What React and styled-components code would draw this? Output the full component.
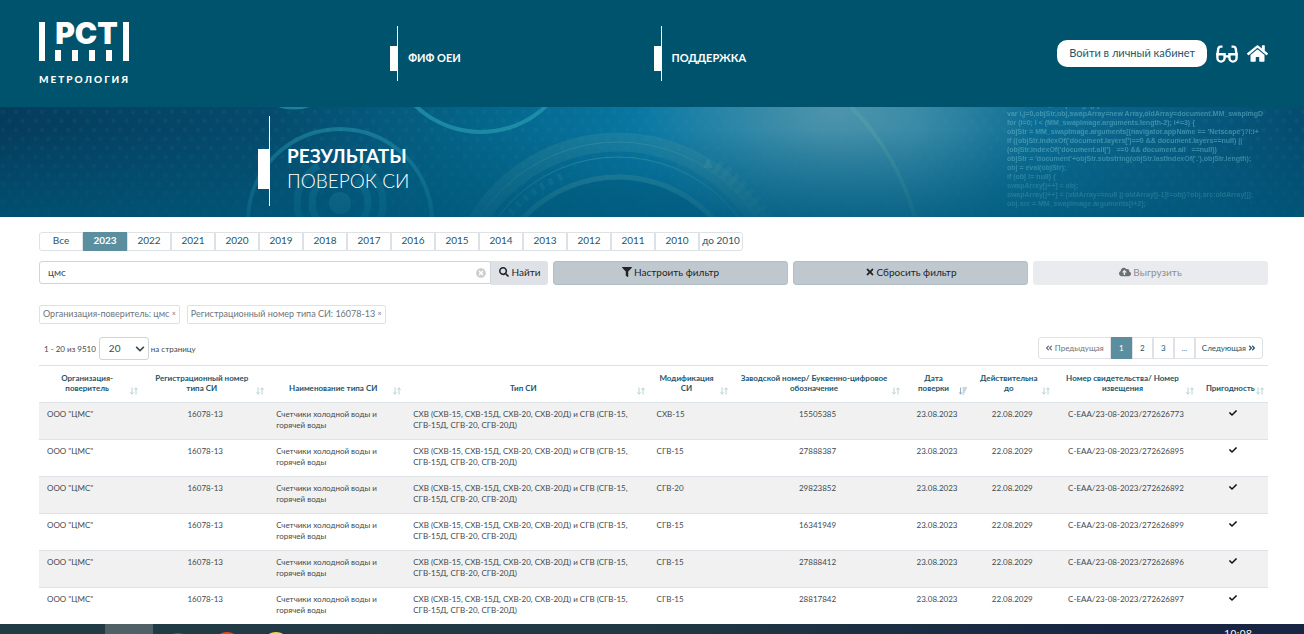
import React, { useState } from "react";
import styled, { createGlobalStyle } from "styled-components";
import {
  FaAngleDoubleLeft,
  FaAngleDoubleRight,
  FaCheck,
  FaChevronDown,
  FaCloudUploadAlt,
  FaFilter,
  FaHome,
  FaSearch,
  FaSortAmountDown,
  FaTimes,
  FaTimesCircle,
} from "react-icons/fa";

const years = [
  "Все", "2023", "2022", "2021", "2020", "2019", "2018", "2017",
  "2016", "2015", "2014", "2013", "2012", "2011", "2010", "до 2010",
];

const columns = [
  { title: "Организация-поверитель", width: "8.4%" },
  { title: "Регистрационный номер типа СИ", width: "10.25%" },
  { title: "Наименование типа СИ", width: "11.15%" },
  { title: "Тип СИ", width: "19.8%" },
  { title: "Модификация СИ", width: "6.75%" },
  { title: "Заводской номер/ Буквенно-цифровое обозначение", width: "14%" },
  { title: "Дата поверки", width: "5.45%", sorted: true },
  { title: "Действительна до", width: "6.8%" },
  { title: "Номер свидетельства/ Номер извещения", width: "11.7%" },
  { title: "Пригодность", width: "5.7%" },
];

const results = [
  { mod: "СХВ-15", serial: "15505385", cert: "С-ЕАА/23-08-2023/272626773" },
  { mod: "СГВ-15", serial: "27888387", cert: "С-ЕАА/23-08-2023/272626895" },
  { mod: "СГВ-20", serial: "29823852", cert: "С-ЕАА/23-08-2023/272626892" },
  { mod: "СГВ-15", serial: "16341949", cert: "С-ЕАА/23-08-2023/272626899" },
  { mod: "СГВ-15", serial: "27888412", cert: "С-ЕАА/23-08-2023/272626896" },
  { mod: "СГВ-15", serial: "28817842", cert: "С-ЕАА/23-08-2023/272626897" },
];

const code = `function MM_swapImage() { //v3.0
var i,j=0,objStr,obj,swapArray=new Array,oldArray=document.MM_swapImgD
for (i=0; i < (MM_swapImage.arguments.length-2); i+=3) {
objStr = MM_swapImage.arguments[(navigator.appName == 'Netscape')?i:i+
if ((objStr.indexOf('document.layers[')==0 && document.layers==null) ||
(objStr.indexOf('document.all[')   ==0 && document.all   ==null))
objStr = 'document'+objStr.substring(objStr.lastIndexOf('.'),objStr.length);
obj = eval(objStr);
if (obj != null) {
swapArray[j++] = obj;
swapArray[j++] = (oldArray==null || oldArray[j-1]!=obj)?obj.src:oldArray[j];
obj.src = MM_swapImage.arguments[i+2];`;

function SortIcon() {
  return (
    <svg width="8" height="8" viewBox="0 0 8 8" fill="none" stroke="currentColor">
      <path d="M2 0.5v6.5M0.4 5.4L2 7.2l1.6-1.8M6 7.5V1M4.4 2.6L6 0.8l1.6 1.8" />
    </svg>
  );
}

function GlassesIcon() {
  return (
    <svg width="22" height="18" viewBox="0 0 22 18" fill="none" stroke="currentColor" strokeWidth="2.4">
      <path d="M6.5 1.6H5C3.2 1.6 2.4 2.4 2.2 4L1.4 10.5M15.5 1.6H17c1.8 0 2.6.8 2.8 2.4l.8 6.5" />
      <path d="M1.4 9.2h7.2v3.6a3.4 3.6 0 0 1-7.2 0zM13.4 9.2h7.2v3.6a3.4 3.6 0 0 1-7.2 0z" />
      <path d="M8.6 11.4h4.8" />
    </svg>
  );
}

function BannerArt() {
  return (
    <Art viewBox="0 0 1304 110" preserveAspectRatio="xMidYMid slice" aria-hidden="true">
      <defs>
        <pattern id="dots" width="13" height="18" patternUnits="userSpaceOnUse">
          <circle cx="3" cy="5" r="2.2" fill="#2c9ac0" opacity="0.08" />
          <circle cx="9.5" cy="14" r="2.2" fill="#2c9ac0" opacity="0.08" />
        </pattern>
        <linearGradient id="shade" x1="0" y1="0" x2="0" y2="1">
          <stop offset="0.2" stopColor="#00587a" stopOpacity="0" />
          <stop offset="1" stopColor="#00587a" stopOpacity="0.7" />
        </linearGradient>
      </defs>
      <rect width="1304" height="110" fill="url(#dots)" />
      <g fill="none" stroke="#2ca3b8">
        <circle cx="340" cy="114" r="92" strokeWidth="4" opacity="0.45" />
        <circle cx="340" cy="96" r="43" strokeWidth="7" opacity="0.3" strokeDasharray="90 45" strokeDashoffset="45" />
        <circle cx="340" cy="96" r="28" strokeWidth="7" opacity="0.35" strokeDasharray="55 33" strokeDashoffset="27" />
        <circle cx="481" cy="-70" r="95" strokeWidth="4" opacity="0.6" />
        <circle cx="294" cy="-48" r="49" strokeWidth="3" opacity="0.6" />
      </g>
      <circle cx="340" cy="96" r="11" fill="#2b8da6" opacity="0.5" />
      <g fill="none" stroke="#5ba5a8">
        <circle cx="618" cy="200" r="165" strokeWidth="19" opacity="0.22" />
        <circle cx="618" cy="200" r="165" strokeWidth="1" opacity="0.35" />
        <circle cx="618" cy="200" r="150" strokeWidth="1" opacity="0.55" />
        <circle cx="618" cy="200" r="130" strokeWidth="5" opacity="0.4" />
        <path d="M510 106 A143 143 0 0 1 566 68" strokeWidth="7" strokeDasharray="4 6" opacity="0.25" />
        <path d="M716 59 A172 172 0 0 1 768 115" strokeWidth="14" strokeDasharray="5 5" opacity="0.2" />
        <path d="M851 0 Q896 45 915 110" strokeWidth="4" opacity="0.4" />
      </g>
      <circle cx="618" cy="200" r="127" fill="#005878" opacity="0.4" />
      <path d="M703 61l5-10 5 10z" fill="#5ba5a8" opacity="0.35" />
      <rect width="1304" height="110" fill="url(#shade)" />
    </Art>
  );
}

export default function App() {
  const [year, setYear] = useState("2023");
  const [query, setQuery] = useState("цмс");

  return (
    <Screen>
      <GlobalStyle />
      <Page>
        <Header>
          <Logo href="#">
            <LogoMark>
              <LogoBar />
              <LogoCenter>
                <LogoText>РСТ</LogoText>
                <LogoTicks>
                  <i />
                  <i />
                  <i />
                  <i />
                </LogoTicks>
              </LogoCenter>
              <LogoBar />
            </LogoMark>
            <LogoCaption>МЕТРОЛОГИЯ</LogoCaption>
          </Logo>
          <NavItem href="#">ФИФ ОЕИ</NavItem>
          <HeaderEnd>
            <NavItem href="#">ПОДДЕРЖКА</NavItem>
            <Actions>
              <LoginButton>Войти в личный кабинет</LoginButton>
              <IconLink href="#" aria-label="Версия для слабовидящих">
                <GlassesIcon />
              </IconLink>
              <IconLink href="#" aria-label="Главная">
                <FaHome />
              </IconLink>
            </Actions>
          </HeaderEnd>
        </Header>

        <Banner>
          <BannerArt />
          <BannerCode aria-hidden="true">{code}</BannerCode>
          <Title>
            <strong>РЕЗУЛЬТАТЫ</strong>
            <span>ПОВЕРОК СИ</span>
          </Title>
        </Banner>

        <Content>
          <Years>
            {years.map((item) => (
              <YearButton key={item} $active={item === year} onClick={() => setYear(item)}>
                {item}
              </YearButton>
            ))}
          </Years>

          <Toolbar>
            <SearchGroup>
              <SearchInput
                aria-label="Поиск"
                value={query}
                onChange={(e) => setQuery(e.target.value)}
              />
              <ClearButton aria-label="Очистить" onClick={() => setQuery("")}>
                <FaTimesCircle />
              </ClearButton>
              <FindButton>
                <FaSearch />
                Найти
              </FindButton>
            </SearchGroup>
            <ToolButton>
              <FaFilter />
              Настроить фильтр
            </ToolButton>
            <ToolButton>
              <FaTimes />
              Сбросить фильтр
            </ToolButton>
            <ToolButton disabled>
              <FaCloudUploadAlt />
              Выгрузить
            </ToolButton>
          </Toolbar>

          <Tags>
            <Tag>
              Организация-поверитель: цмс <sup>×</sup>
            </Tag>
            <Tag>
              Регистрационный номер типа СИ: 16078-13 <sup>×</sup>
            </Tag>
          </Tags>

          <PageRow>
            <PageSize>
              <span>1 - 20 из 9510</span>
              <SelectBox>
                <select id="size" defaultValue="20">
                  <option>20</option>
                  <option>50</option>
                  <option>100</option>
                </select>
                <FaChevronDown />
              </SelectBox>
              <label htmlFor="size">на страницу</label>
            </PageSize>
            <Pager>
              <PageButton $wide disabled>
                <FaAngleDoubleLeft />
                Предыдущая
              </PageButton>
              <PageButton $active>1</PageButton>
              <PageButton>2</PageButton>
              <PageButton>3</PageButton>
              <PageButton disabled>...</PageButton>
              <PageButton $wide>
                Следующая
                <FaAngleDoubleRight />
              </PageButton>
            </Pager>
          </PageRow>

          <Table>
            <thead>
              <tr>
                {columns.map((col) => (
                  <HeadCell key={col.title} style={{ width: col.width }}>
                    {col.title}
                    <SortMark $active={col.sorted}>
                      {col.sorted ? <FaSortAmountDown /> : <SortIcon />}
                    </SortMark>
                  </HeadCell>
                ))}
              </tr>
            </thead>
            <tbody>
              {results.map((row) => (
                <Row key={row.cert}>
                  <Cell>ООО "ЦМС"</Cell>
                  <Cell $center>16078-13</Cell>
                  <Cell>Счетчики холодной воды и горячей воды</Cell>
                  <Cell>
                    СХВ (СХВ-15, СХВ-15Д, СХВ-20, СХВ-20Д) и СГВ (СГВ-15, СГВ-15Д, СГВ-20, СГВ-20Д)
                  </Cell>
                  <Cell>{row.mod}</Cell>
                  <Cell $center>{row.serial}</Cell>
                  <Cell $center>23.08.2023</Cell>
                  <Cell $center>22.08.2029</Cell>
                  <Cell $center>{row.cert}</Cell>
                  <Cell $center>
                    <FaCheck />
                  </Cell>
                </Row>
              ))}
            </tbody>
          </Table>
        </Content>
      </Page>

      <Taskbar>
        <TaskApp $active $color="#d3303a" />
        <TaskApp $color="#c22f3c" />
        <TaskApp $color="#f4431f" $raised />
        <TaskApp $color="#f8d548" $raised />
        <Clock>10:08</Clock>
      </Taskbar>
    </Screen>
  );
}

const GlobalStyle = createGlobalStyle`
  * {
    box-sizing: border-box;
  }
  body {
    margin: 0;
    background: #fff;
    color: #3f4a50;
    font-family: Lato, "Open Sans", sans-serif;
    font-size: 10px;
  }
  button, input, select {
    font: inherit;
    color: inherit;
    margin: 0;
  }
  a {
    color: inherit;
    text-decoration: none;
  }
`;

const Screen = styled.div`
  display: flex;
  flex-direction: column;
  height: 100vh;
`;

const Page = styled.main`
  flex: 1;
  min-height: 0;
  overflow: hidden;
`;

const Header = styled.header`
  display: grid;
  grid-template-columns: 4fr 3fr 7fr;
  align-items: center;
  height: 107px;
  padding: 0 36px 0 39px;
  background: #00536c;
  color: #fff;
`;

const Logo = styled.a`
  display: flex;
  flex-direction: column;
  gap: 12px;
  width: 90px;
`;

const LogoMark = styled.div`
  display: flex;
  justify-content: space-between;
  height: 39px;
`;

const LogoBar = styled.div`
  width: 6px;
  background: #fff;
`;

const LogoCenter = styled.div`
  display: flex;
  flex-direction: column;
  justify-content: space-between;
  margin-left: 5px;
`;

const LogoText = styled.div`
  font-family: Inter, sans-serif;
  font-size: 30px;
  font-weight: 900;
  line-height: 23px;
`;

const LogoTicks = styled.div`
  display: flex;
  gap: 11px;
  height: 11px;

  i {
    width: 6px;
    background: #fff;
  }
`;

const LogoCaption = styled.div`
  font-size: 10px;
  font-weight: 900;
  line-height: 12px;
  letter-spacing: 2px;
`;

const NavItem = styled.a`
  height: 55px;
  padding: 4px 0 0 18px;
  background:
    linear-gradient(#fff, #fff) 0 20px / 8px 25px no-repeat,
    linear-gradient(#fff, #fff) 7px 0 / 1px 100% no-repeat;
  font-size: 11px;
  font-weight: 700;
  line-height: 55px;
`;

const HeaderEnd = styled.div`
  display: flex;
  align-items: center;
  justify-content: space-between;
`;

const Actions = styled.div`
  display: flex;
  align-items: center;
  gap: 9px;
`;

const LoginButton = styled.button`
  height: 27px;
  padding: 0 12px 2px;
  border: none;
  border-radius: 10px;
  background: #fff;
  color: #24566b;
  font-size: 11px;
`;

const IconLink = styled.a`
  display: flex;
  font-size: 21px;
`;

const Banner = styled.section`
  position: relative;
  height: 110px;
  padding: 9px 0 0 258px;
  overflow: hidden;
  background:
    radial-gradient(ellipse 200px 150px at 64% 0, rgba(110, 160, 175, 0.65), transparent),
    linear-gradient(90deg, #053c5c 0, #054a6c 20%, #046488 36%, #0878a4 50%, #1b7ea2 70%, #0c6b92 80%, #044c70 100%);
  color: #fff;
`;

const Art = styled.svg`
  position: absolute;
  inset: 0;
  width: 100%;
  height: 100%;
`;

const BannerCode = styled.pre`
  position: absolute;
  top: -7px;
  right: 38px;
  width: 259px;
  margin: 0;
  color: #5fb0c4;
  font: bold 7px/9px "Liberation Sans", sans-serif;
  opacity: 0.6;
  mask-image: linear-gradient(#000 50%, rgba(0, 0, 0, 0.5) 80%);
`;

const Title = styled.h1`
  position: relative;
  display: flex;
  flex-direction: column;
  height: 90px;
  margin: 0;
  padding: 27px 0 0 29px;
  background:
    linear-gradient(#fff, #fff) 11px 0 / 1px 100% no-repeat,
    linear-gradient(#fff, #fff) 0 33px / 11px 40px no-repeat;
  font-size: 19px;
  font-weight: 300;
  line-height: 25px;

  strong {
    font-weight: 700;
  }
`;

const Content = styled.section`
  padding: 15px 36px 0 39px;
`;

const Years = styled.div`
  display: flex;
`;

const YearButton = styled.button`
  width: 44px;
  height: 19px;
  padding: 0 0 4px;
  border: 1px solid ${(p) => (p.$active ? "#5b8fa0" : "#dee2e6")};
  background: ${(p) => (p.$active ? "#5b8fa0" : "#fff")};
  color: ${(p) => (p.$active ? "#fff" : "#24566b")};
  font-weight: ${(p) => (p.$active ? 700 : 400)};
  line-height: 12px;
  white-space: nowrap;

  &:first-child {
    border-radius: 3px 0 0 3px;
  }
  &:last-child {
    border-radius: 0 3px 3px 0;
  }
`;

const Toolbar = styled.div`
  display: grid;
  grid-template-columns: 13fr 6fr 6fr 6fr;
  gap: 5px;
  margin-top: 10px;
`;

const SearchGroup = styled.div`
  display: flex;
  position: relative;
  height: 24px;
`;

const SearchInput = styled.input`
  flex: 1;
  min-width: 0;
  height: 23px;
  padding: 0 24px 2px 8px;
  border: 1px solid #ced4da;
  border-radius: 3px 0 0 3px;
  outline: none;
`;

const ClearButton = styled.button`
  position: absolute;
  top: 7px;
  right: 62px;
  display: flex;
  padding: 0;
  border: none;
  background: none;
  color: #ccc;
`;

const FindButton = styled.button`
  display: flex;
  align-items: center;
  justify-content: center;
  gap: 3px;
  width: 57px;
  padding: 0 0 3px;
  border: none;
  border-radius: 0 3px 3px 0;
  background: #dee2e6;
  color: #212529;
`;

const ToolButton = styled.button`
  display: flex;
  align-items: center;
  justify-content: center;
  gap: 2px;
  height: 24px;
  padding: 0 0 3px;
  border: 1px solid #b3bfc8;
  border-radius: 3px;
  background: #c0c8cf;
  color: #212529;

  &:disabled {
    border-color: #e9ebee;
    background: #e9ebee;
    color: #8b8f93;
  }
  &:disabled svg {
    color: #6b6f73;
    font-size: 12px;
  }
`;

const Tags = styled.div`
  display: flex;
  gap: 7px;
  margin-top: 20px;
`;

const Tag = styled.span`
  height: 19px;
  padding: 1px 3px;
  border: 1px solid #dee2e6;
  border-radius: 2px;
  color: #6c757d;
  font-size: 9px;
  line-height: 13px;

  sup {
    font-size: 7px;
    line-height: 1;
    vertical-align: 1px;
  }
`;

const PageRow = styled.div`
  display: flex;
  justify-content: space-between;
  margin-top: 13px;
  padding: 0 5px;
`;

const PageSize = styled.div`
  display: flex;
  align-items: center;
  font-size: 8px;

  label {
    margin-left: 2px;
  }
`;

const SelectBox = styled.div`
  display: flex;
  align-items: center;
  position: relative;
  margin-left: 3px;

  select {
    width: 50px;
    height: 23px;
    padding: 0 8px 2px 9px;
    border: 1px solid #ced4da;
    border-radius: 3px;
    background: #fff;
    appearance: none;
    font-size: 10px;
  }
  svg {
    position: absolute;
    right: 4px;
    font-size: 10px;
    pointer-events: none;
  }
`;

const Pager = styled.nav`
  display: flex;
`;

const PageButton = styled.button`
  display: flex;
  align-items: center;
  justify-content: center;
  gap: 2px;
  min-width: 21px;
  height: 22px;
  padding: 0 6px 1px;
  border: 1px solid ${(p) => (p.$active ? "#5b8fa0" : "#dee2e6")};
  background: ${(p) => (p.$active ? "#5b8fa0" : "#fff")};
  color: ${(p) => (p.$active ? "#fff" : "#24566b")};
  font-size: 8px;

  &:disabled {
    color: #6c757d;
  }
  &:first-child {
    border-radius: 3px 0 0 3px;
  }
  &:last-child {
    border-radius: 0 3px 3px 0;
  }
`;

const Table = styled.table`
  width: 100%;
  margin-top: 5px;
  border-collapse: separate;
  border-spacing: 0;
  table-layout: fixed;
  font-size: 8px;
`;

const HeadCell = styled.th`
  position: relative;
  height: 38px;
  padding: 7px 15px 9px 8px;
  border-top: 1px solid #dee2e6;
  border-bottom: 1px solid #dee2e6;
  color: #24566b;
  line-height: 10px;
  vertical-align: bottom;
`;

const SortMark = styled.span`
  position: absolute;
  right: 4px;
  bottom: 7px;
  display: flex;
  color: ${(p) => (p.$active ? "#8fb0bc" : "#b9d0d6")};
`;

const Row = styled.tr`
  background: #fff;

  &:nth-child(odd) {
    background: #f1f1f1;
  }
`;

const Cell = styled.td`
  height: 37px;
  padding: 6px 8px 8px;
  border-bottom: 1px solid #dee2e6;
  line-height: 11px;
  text-align: ${(p) => (p.$center ? "center" : "left")};
  vertical-align: top;

  svg {
    color: #111;
  }
`;

const Taskbar = styled.footer`
  display: flex;
  height: 10px;
  padding: 0 52px 0 105px;
  overflow: hidden;
  background: linear-gradient(90deg, #213b45, #203843 50%, #172542 85%);
`;

const TaskApp = styled.div`
  width: 48px;
  height: 40px;
  margin-right: 1px;
  padding: ${(p) => (p.$raised ? 8 : 9)}px 10px 0;
  background: ${(p) => (p.$active ? "#4f6067" : "transparent")};

  &::before {
    content: "";
    display: block;
    height: 28px;
    border-radius: 50%;
    background: ${(p) => p.$color};
  }
`;

const Clock = styled.time`
  margin-left: auto;
  padding-top: 3px;
  color: #fff;
  font-family: "Open Sans", sans-serif;
  font-size: 11px;
  line-height: 14px;
`;
